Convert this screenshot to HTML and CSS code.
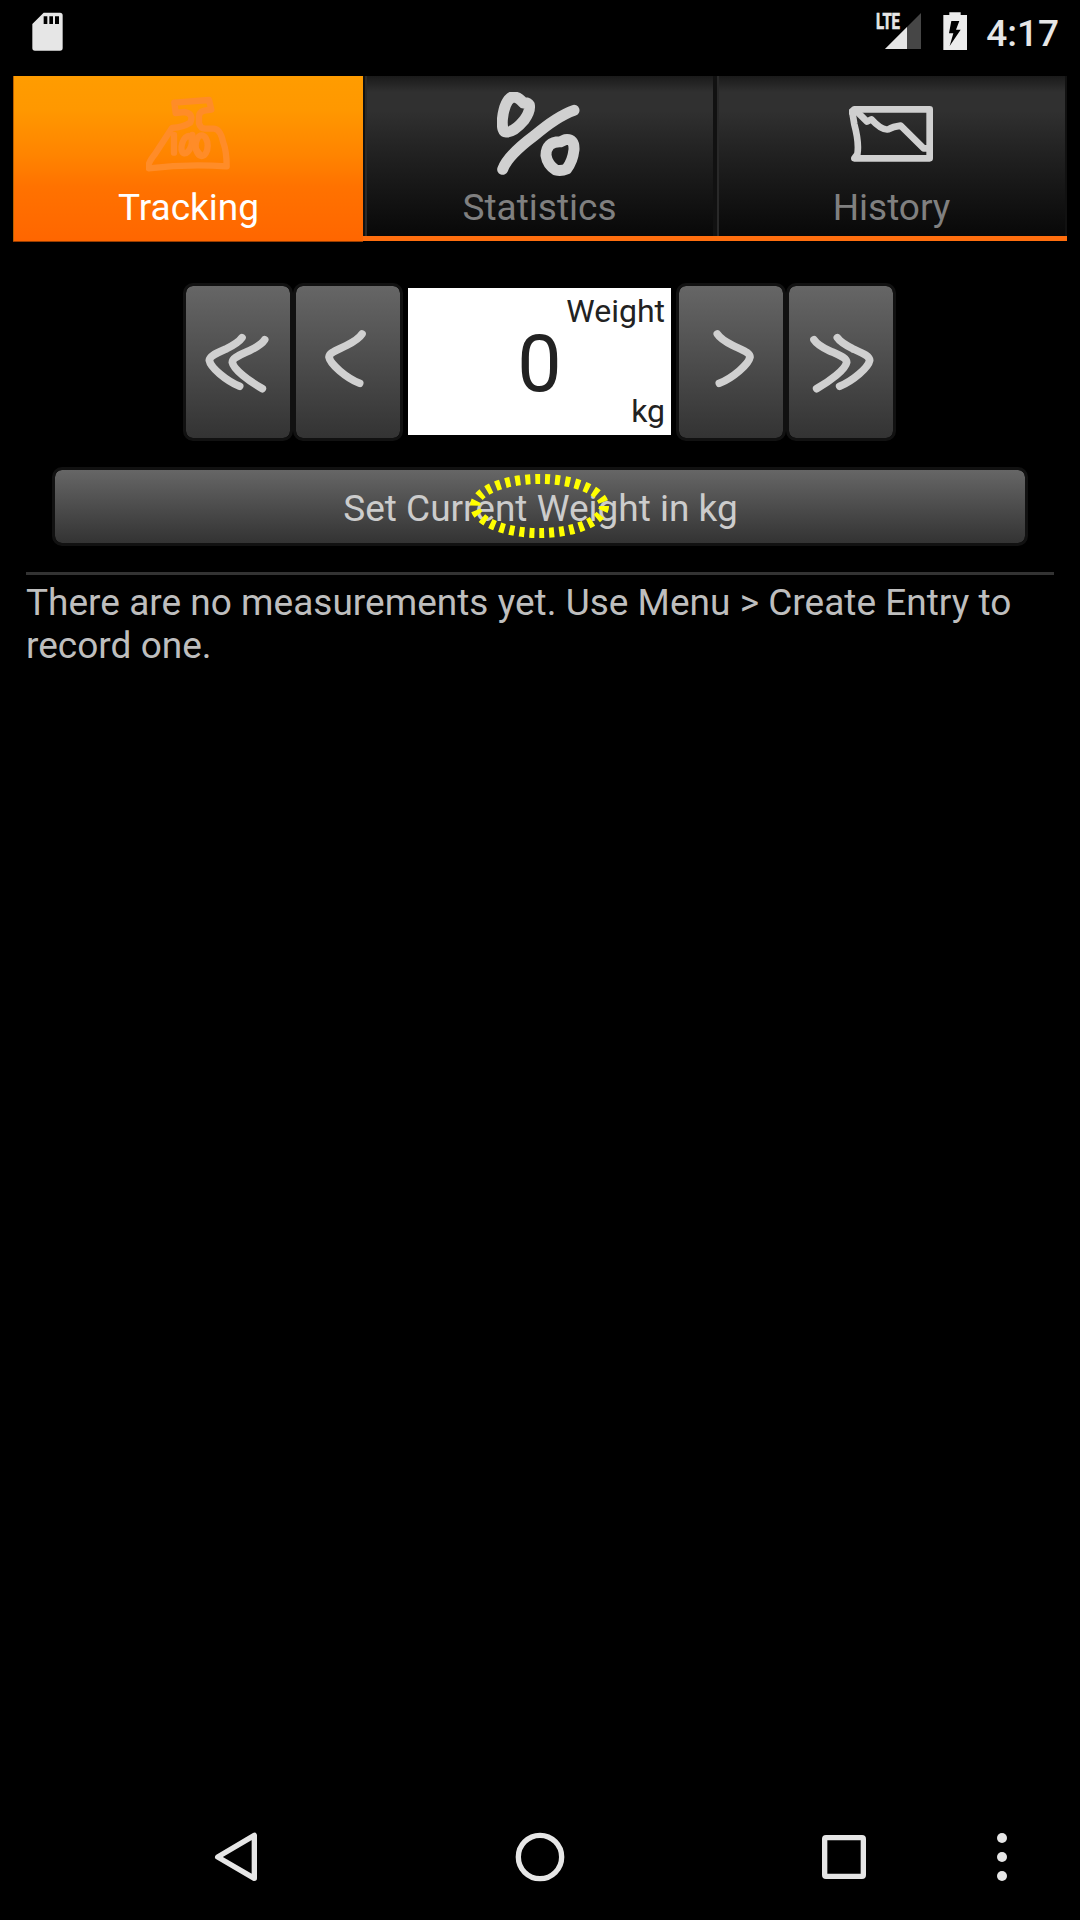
FILE: index.html
```html
<!DOCTYPE html>
<html lang="en">
<head>
<meta charset="utf-8">
<title>Weight tracker</title>
<link rel="stylesheet" href="styles.css">
</head>
<body>
<header class="status">
  <svg class="sd" viewBox="96 36 93 117"><path fill="#e6e6e6" fill-rule="evenodd" d="M131 38H180Q188 38 188 46V144Q188 152 180 152H105Q97 152 97 144V72ZM131 49V72H142V49ZM148 49V72H159V49ZM165 49V72H177V49Z"/></svg>
  <div class="status-right">
    <svg class="signal" viewBox="525 36 141 117">
      <path fill="#464646" d="M663 39V147H555Z"/>
      <path fill="#e6e6e6" d="M621 81V147H555Z"/>
      <text class="lte" x="528" y="87" textLength="72" lengthAdjust="spacingAndGlyphs">LTE</text>
    </svg>
    <svg class="battery" viewBox="729 36 72 117"><path fill="#ececec" fill-rule="evenodd" d="M748 37H782V45H801V150H730V45H748ZM754 63L747 100H760L749 138L782 89H768L778 63Z"/></svg>
    <span class="clock">4:17</span>
  </div>
</header>

<main class="app">
  <nav class="tabs">
    <div class="tab tab-active">
      <svg class="tab-icon" viewBox="438 276 252 252"><g class="stroke scale">
        <path d="M523 308L627 300L634 329L613 332Q596 336 597 352V370Q601 385 615 386H642Q661 388 669 425Q680 453 680 499Q560 491 446 505Q441 492 465 462L516 384Q550 382 571 368Q582 340 553 336L527 339Z"/>
        <path d="M522 405V458"/>
        <ellipse cx="560" cy="434" rx="14" ry="27" transform="rotate(18 560 434)"/>
        <ellipse cx="605" cy="437" rx="18" ry="31"/>
        <path d="M577 405Q580 444 601 465"/>
      </g></svg>
      <span>Tracking</span>
    </div>
    <div class="tab">
      <svg class="tab-icon" viewBox="441 66 252 252"><g class="stroke percent">
        <path d="M486 81Q463 93 457 149Q455 187 469 186Q492 187 522 151Q542 123 538 105Q533 97 520 99Q505 79 486 81Z"/>
        <path d="M672 121Q621 139 553 197C502 235 469 268 458 298"/>
        <path d="M645 209C665 206 673 217 672 239Q668 274 650 297Q634 304 617 300Q592 283 588 256C588 230 602 214 632 215Z"/>
      </g></svg>
      <span>Statistics</span>
    </div>
    <div class="tab">
      <svg class="tab-icon" viewBox="447 276 252 252"><g class="stroke chart">
        <path d="M454 336L463 328H689V475H463L472 463Q478 429 463 373L457 337"/>
        <path d="M467 331L501 365L514 358Q545 392 565 388Q579 380 602 377L671 445H687"/>
      </g></svg>
      <span>History</span>
    </div>
  </nav>

  <section class="picker">
    <div class="btn step"><svg viewBox="48 48 312 456"><g class="stroke arrow">
      <path d="M216 203Q206 218 170 236C135 252 119 258 118 271C122 293 167 331 209 349"/>
      <path d="M284 209Q274 225 238 242C203 258 187 264 187 277C191 299 237 333 277 356"/>
    </g></svg></div>
    <div class="btn step"><svg viewBox="378 48 312 456"><path class="stroke arrow" d="M576 192Q566 208 530 226C495 243 478 248 477 261C481 283 528 323 569 340"/></svg></div>
    <div class="display">
      <span class="caption">Weight</span>
      <span class="value">0</span>
      <span class="unit">kg</span>
    </div>
    <div class="btn step"><svg viewBox="57 48 312 456"><path class="stroke arrow" d="M172 192Q182 208 218 226C253 243 270 248 270 261C266 283 219 323 178 340"/></svg></div>
    <div class="btn step"><svg viewBox="387 48 312 456"><g class="stroke arrow">
      <path d="M462 209Q472 225 508 242C543 258 560 264 560 277C556 299 510 333 470 356"/>
      <path d="M532 203Q542 218 578 236C613 252 628 258 629 271C625 293 580 331 539 349"/>
    </g></svg></div>
  </section>

  <div class="btn set">
    <span>Set Current Weight in kg</span>
    <svg class="marker" viewBox="0 0 139 64"><ellipse cx="69.5" cy="32" rx="64.5" ry="27"/></svg>
  </div>

  <p class="empty">There are no measurements yet. Use Menu &gt; Create Entry to record one.</p>
</main>

<footer class="navbar">
  <svg viewBox="0 0 150 150"><path class="nav-line" d="M20 75L130 10V139Z"/></svg>
  <svg viewBox="0 0 150 150"><circle class="nav-line" cx="75" cy="75" r="65"/></svg>
  <svg viewBox="0 0 150 150"><rect class="nav-line" x="17" y="17" width="116" height="116" rx="4"/></svg>
  <svg class="more" viewBox="0 0 150 150"><g fill="#e6e6e6"><circle cx="75" cy="18" r="15"/><circle cx="75" cy="75" r="15"/><circle cx="75" cy="132" r="15"/></g></svg>
</footer>
</body>
</html>
```
FILE: styles.css
```css
* { box-sizing: border-box; }

body {
  margin: 0;
  width: 1080px;
  height: 1920px;
  display: flex;
  flex-direction: column;
  background: #000;
  color: #bebebe;
  font: 37px/43px Roboto, sans-serif;
  overflow: hidden;
}

svg { display: block; }

.stroke {
  fill: none;
  stroke: #d0d0d0;
  stroke-linecap: round;
  stroke-linejoin: round;
}

/* status bar */
.status {
  height: 63px;
  padding: 12px 21px 0 32px;
  display: flex;
  justify-content: space-between;
  align-items: flex-start;
}
.sd { width: 31px; height: 39px; }
.status-right { display: flex; }
.signal { width: 47px; height: 39px; margin-right: 21px; overflow: visible; }
.battery { width: 24px; height: 39px; margin-right: 19px; }
.lte {
  font: bold 66px Roboto, sans-serif;
  fill: #e6e6e6;
  stroke: #e6e6e6;
  stroke-width: 2;
}
.clock { color: #e6e6e6; font-weight: 500; line-height: 43px; }

/* tabs */
.app { flex: 1; padding: 13px; }
.tabs {
  height: 166px;
  display: grid;
  grid-template-columns: 350px 352px 352px;
}
.tab {
  height: 165px;
  padding: 16px 0 0 1px;
  display: flex;
  flex-direction: column;
  align-items: center;
  gap: 10px;
  color: #808080;
  background: linear-gradient(#1a1a1a, #303030 10%, #303030 22%, #202020 51%, #191919 65%, #080808);
  border-bottom: 5px solid #ff6e0e;
  box-shadow: inset 2px 0 #111, inset 4px 0 #292929, inset -2px 0 #111;
}
.tab-active {
  height: 166px;
  color: #fff;
  background: linear-gradient(#ff9c00, #ff9800 20%, #ff8400 48%, #ff7200 67%, #ff6600);
  border-bottom: 1px solid #993d00;
  box-shadow: inset 1px 0 #b86000;
}
.tab-icon { width: 84px; height: 84px; margin-right: 1px; }
.scale { stroke: #ff8c28; stroke-width: 19; }
.percent { stroke-width: 33; }
.chart { stroke-width: 20; }

/* weight picker */
.picker {
  margin-top: 41px;
  padding-right: 1px;
  display: flex;
  justify-content: center;
}
.btn {
  border: 3px solid #111;
  border-radius: 10px;
  background: linear-gradient(#666, #333) padding-box;
}
.step { width: 110px; height: 158px; }
.step svg { width: 104px; height: 152px; }
.arrow { stroke-width: 23; }
.display {
  width: 263px;
  height: 147px;
  margin: 5px 5px 0;
  padding: 4px 6px 0;
  display: flex;
  flex-direction: column;
  background: #fff;
  color: #222;
  font-size: 32px;
  line-height: 38px;
}
.caption, .unit { text-align: right; }
.value {
  height: 62px;
  font-size: 79px;
  line-height: 69px;
  text-align: center;
}

.set {
  position: relative;
  height: 79px;
  margin: 26px 39px 0;
  padding: 3px 0 0 1px;
  display: flex;
  align-items: center;
  justify-content: center;
  color: #ccc;
}
.marker {
  position: absolute;
  left: 415px;
  top: 4px;
  width: 139px;
  height: 64px;
  fill: none;
  stroke: #ff0;
  stroke-width: 10;
  stroke-dasharray: 5;
}

.empty {
  margin: 26px 13px 0;
  padding-top: 6px;
  border-top: 3px solid #333;
  letter-spacing: 0.015px;
}

/* navigation bar */
.navbar {
  height: 126px;
  padding-left: 211px;
  display: flex;
  gap: 254px;
  align-items: center;
}
.navbar svg { flex: none; width: 50px; height: 50px; }
.navbar .more { margin-left: -146px; }
.nav-line {
  fill: none;
  stroke: #e6e6e6;
  stroke-width: 16;
  stroke-linejoin: round;
}
```
